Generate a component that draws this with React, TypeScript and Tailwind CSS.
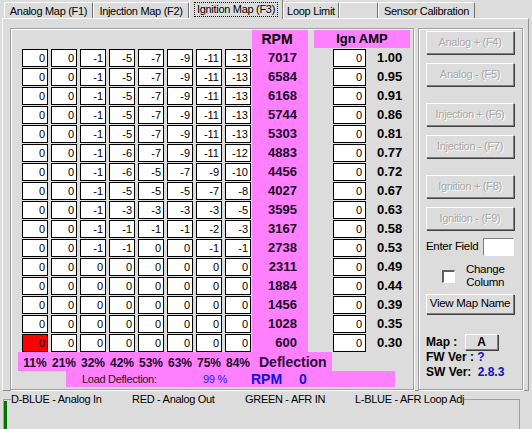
import React from 'react';

type Row = { rpm: number; v: number[]; amp: string };
const Z = [0, 0, 0, 0, 0, 0, 0, 0];
const rows: Row[] = [
  { rpm: 7017, v: [0, 0, -1, -5, -7, -9, -11, -13], amp: '1.00' },
  { rpm: 6584, v: [0, 0, -1, -5, -7, -9, -11, -13], amp: '0.95' },
  { rpm: 6168, v: [0, 0, -1, -5, -7, -9, -11, -13], amp: '0.91' },
  { rpm: 5744, v: [0, 0, -1, -5, -7, -9, -11, -13], amp: '0.86' },
  { rpm: 5303, v: [0, 0, -1, -5, -7, -9, -11, -13], amp: '0.81' },
  { rpm: 4883, v: [0, 0, -1, -6, -7, -9, -11, -12], amp: '0.77' },
  { rpm: 4456, v: [0, 0, -1, -6, -5, -7, -9, -10], amp: '0.72' },
  { rpm: 4027, v: [0, 0, -1, -5, -5, -5, -7, -8], amp: '0.67' },
  { rpm: 3595, v: [0, 0, -1, -3, -3, -3, -3, -5], amp: '0.63' },
  { rpm: 3167, v: [0, 0, -1, -1, -1, -1, -2, -3], amp: '0.58' },
  { rpm: 2738, v: [0, 0, -1, -1, 0, 0, -1, -1], amp: '0.53' },
  { rpm: 2311, v: Z, amp: '0.49' },
  { rpm: 1884, v: Z, amp: '0.44' },
  { rpm: 1456, v: Z, amp: '0.39' },
  { rpm: 1028, v: Z, amp: '0.35' },
  { rpm: 600, v: Z, amp: '0.30' },
];
const pct = ['11%', '21%', '32%', '42%', '53%', '63%', '75%', '84%'];

function Btn({ children, disabled, className = '' }: { children: React.ReactNode; disabled?: boolean; className?: string }) {
  return (
    <div
      className={`flex items-center justify-center bg-[#dcdcdc] border-t border-l border-t-white border-l-white border-r border-b border-r-[#808080] border-b-[#808080] shadow-[1px_1px_0_#404040] ${
        disabled ? 'text-[#a8a8a8] [text-shadow:1px_1px_0_#ffffff]' : 'text-black'
      } ${className}`}
    >
      {children}
    </div>
  );
}

function Tab({ label, w, selected }: { label: string; w: string; selected?: boolean }) {
  if (selected) {
    return (
      <div
        className={`${w} h-[20px] -mb-[1px] bg-[#dcdcdc] border-t border-l border-t-white border-l-white border-r border-r-[#808080] rounded-t-[2px] flex items-start justify-center pt-[2px] relative z-10`}
      >
        <span className="border border-dotted border-black px-[2px] leading-[13px]">{label}</span>
      </div>
    );
  }
  return (
    <div
      className={`${w} h-[16px] bg-[#dcdcdc] border-t border-l border-t-white border-l-white border-r border-r-[#707070] rounded-t-[2px] flex items-center justify-center leading-[14px]`}
    >
      {label}
    </div>
  );
}

export default function App() {
  return (
    <div className="w-[532px] h-[429px] overflow-hidden bg-[#dcdcdc] text-black text-[11px] tracking-[-0.3px] font-['Liberation_Sans',Arial,sans-serif] flex flex-col">
      {/* Tabs */}
      <div className="h-[18px] flex items-end pl-[4px] relative z-10">
        <Tab label="Analog Map (F1)" w="w-[89px]" />
        <Tab label="Injection Map (F2)" w="w-[96px]" />
        <Tab label="Ignition Map (F3)" w="w-[94px]" selected />
        <Tab label="Loop Limit" w="w-[56px]" />
        <Tab label="" w="w-[39px]" />
        <Tab label="Sensor Calibration" w="w-[97px]" />
      </div>

      {/* Tab panel */}
      <div className="ml-[2px] w-[527px] h-[379px] border-t border-l border-t-white border-l-white border-r border-b border-r-[#909090] border-b-[#909090] flex pt-[9px] pl-[7px]">
        {/* Left group */}
        <div className="w-[404px] h-[362px] border border-[#a0a0a0] shadow-[inset_1px_1px_0_#ffffff,1px_1px_0_#ffffff] pt-[1px] pl-[11px] flex flex-col">
          {/* header */}
          <div className="flex h-[18px]">
            <div className="w-[230px]" />
            <div className="w-[56px] bg-[#ff80ff] flex items-center justify-center font-bold text-[14px] tracking-normal pr-[6px]">
              RPM
            </div>
            <div className="ml-[6px] w-[96px] bg-[#ff80ff] flex items-center justify-center font-bold text-[13px] tracking-normal">
              Ign AMP
            </div>
          </div>
          {rows.map((r, ri) => (
            <div key={r.rpm} className="flex h-[19px]">
              <div className="flex gap-[3px] items-end">
                {r.v.map((x, ci) => (
                  <div
                    key={ci}
                    className={`w-[26px] h-[18px] border border-black text-right pr-[2px] leading-[16px] tracking-normal ${
                      ri === 15 && ci === 0 ? 'bg-[#ff0000]' : 'bg-white'
                    }`}
                  >
                    {x}
                  </div>
                ))}
              </div>
              <div className="ml-[1px] w-[56px] bg-[#ff80ff] text-right pr-[11px] font-bold text-[13px] leading-[19px] tracking-normal text-[#1a0a2a]">
                {r.rpm}
              </div>
              <div className="ml-[6px] w-[96px] flex items-end">
                <div className="ml-[19px] w-[33px] h-[18px] bg-white border border-black text-right pr-[3px] leading-[16px] tracking-normal">
                  0
                </div>
                <div className="ml-[11px] font-bold text-[13px] leading-[19px] tracking-normal">{r.amp}</div>
              </div>
            </div>
          ))}
          {/* percent row */}
          <div className="flex h-[19px] -ml-[4px]">
            <div className="w-[314px] bg-[#ff80ff] flex items-center pl-[4px]">
              <div className="flex gap-[3px]">
                {pct.map((p) => (
                  <div key={p} className="w-[26px] text-center font-bold text-[12px] tracking-normal text-[#1a0a2a] leading-[14px] pt-[3px]">
                    {p}
                  </div>
                ))}
              </div>
              <div className="ml-[8px] font-bold text-[14px] tracking-normal text-[#2a0a3a] leading-[16px]">Deflection</div>
            </div>
          </div>
          {/* load deflection row */}
          <div className="flex h-[16px]">
            <div className="ml-[44px] w-[329px] bg-[#ff80ff] flex items-center leading-[16px]">
              <span className="w-[137px] pl-[16px] text-[#202020]">Load Deflection:</span>
              <span className="w-[48px] text-[#2020ff]">99 %</span>
              <span className="w-[48px] font-bold text-[14px] tracking-normal text-[#1010e0]">RPM</span>
              <span className="font-bold text-[14px] tracking-normal text-[#1010e0]">0</span>
            </div>
          </div>
        </div>

        {/* Right group */}
        <div className="ml-[4px] w-[105px] h-[362px] border border-[#a0a0a0] shadow-[inset_1px_1px_0_#ffffff,1px_1px_0_#ffffff] pt-[2px] pl-[7px] flex flex-col">
          <Btn disabled className="w-[88px] h-[23px]">Analog + (F4)</Btn>
          <Btn disabled className="w-[88px] h-[23px] mt-[9px]">Analog - (F5)</Btn>
          <Btn disabled className="w-[88px] h-[23px] mt-[17px]">Injection + (F6)</Btn>
          <Btn disabled className="w-[88px] h-[23px] mt-[9px]">Injection - (F7)</Btn>
          <Btn disabled className="w-[88px] h-[23px] mt-[17px]">Ignition + (F8)</Btn>
          <Btn disabled className="w-[88px] h-[23px] mt-[9px]">Ignition - (F9)</Btn>
          <div className="w-[88px] h-[18px] mt-[8px] flex items-center">
            <span className="text-[11.5px]">Enter Field</span>
            <div className="ml-auto w-[31px] h-[18px] bg-white border-t border-l border-t-[#808080] border-l-[#808080] border-r border-b border-r-white border-b-white" />
          </div>
          <div className="w-[88px] h-[26px] mt-[7px] flex items-center">
            <div className="ml-[16px] w-[13px] h-[13px] bg-white border-t-2 border-l-2 border-t-[#606060] border-l-[#606060] border-r border-b border-r-white border-b-white" />
            <div className="ml-[11px] text-center leading-[13px] text-[11.5px]">
              Change
              <br />
              Column
            </div>
          </div>
          <Btn className="w-[88px] h-[20px] mt-[5px] text-[11.5px]">View Map Name</Btn>
          <div className="mt-[20px] h-[16px] flex items-center font-bold text-[12px] tracking-normal">
            <span className="w-[39px]">Map :</span>
            <Btn className="w-[33px] h-[16px] font-bold text-[12px]">A</Btn>
          </div>
          <div className="leading-[15px] font-bold text-[12px] tracking-normal">
            FW Ver : <span className="text-[#1010c0]">?</span>
          </div>
          <div className="leading-[15px] font-bold text-[12px] tracking-normal">
            SW Ver: <span className="ml-[3px] text-[#1010c0]">2.8.3</span>
          </div>
        </div>
      </div>

      {/* Legend */}
      <fieldset className="mt-[2px] ml-[3px] w-[517px] h-[40px] border border-[#a0a0a0]">
        <legend className="ml-[7px] leading-[12px] text-[11px]">
          <span className="inline-block w-[121px]">D-BLUE - Analog In</span>
          <span className="inline-block w-[113px]">RED - Analog Out</span>
          <span className="inline-block w-[110px]">GREEN - AFR IN</span>
          <span className="inline-block">L-BLUE - AFR Loop Adj</span>
        </legend>
        <div className="-mt-[4px] w-[3px] h-[30px] bg-[#007700]" />
      </fieldset>
    </div>
  );
}
